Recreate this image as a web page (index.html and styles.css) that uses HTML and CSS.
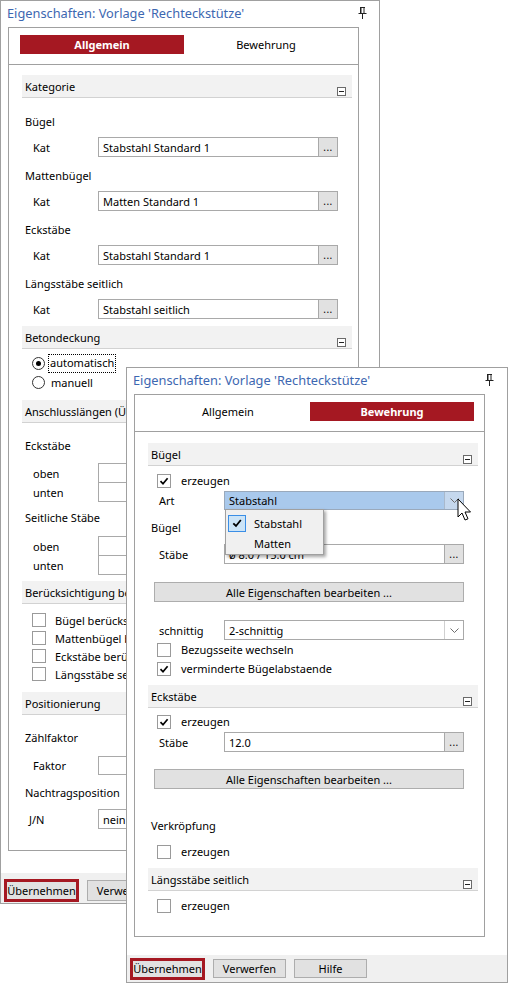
FILE: index.html
```html
<!DOCTYPE html>
<html lang="de">
<head>
<meta charset="utf-8">
<title>Eigenschaften</title>
<link rel="stylesheet" href="styles.css">
</head>
<body>
<div class="desk">

  <section class="win win-back">
    <header class="wtitle">
      <span>Eigenschaften: Vorlage 'Rechteckstütze'</span>
      <svg class="pin" width="9" height="12" viewBox="0 0 9 12"><path d="M2 0.5h5M3 0.5v6M6 0.5v6M2.5 1v5M0.5 6.5h8M4.5 7v5" stroke="#222" fill="none"/></svg>
    </header>
    <div class="panel">
      <div class="tabs"><div class="tab on">Allgemein</div><div class="tab">Bewehrung</div></div>
      <div class="content">
        <div class="band m10"><span>Kategorie</span><i class="coll"></i></div>
        <div class="lbl m14">Bügel</div>
        <div class="row m5"><span class="key">Kat</span><div class="field"><span class="val">Stabstahl Standard 1</span><b class="dots">...</b></div></div>
        <div class="lbl m9">Mattenbügel</div>
        <div class="row m5"><span class="key">Kat</span><div class="field"><span class="val">Matten Standard 1</span><b class="dots">...</b></div></div>
        <div class="lbl m9">Eckstäbe</div>
        <div class="row m5"><span class="key">Kat</span><div class="field"><span class="val">Stabstahl Standard 1</span><b class="dots">...</b></div></div>
        <div class="lbl m9">Längsstäbe seitlich</div>
        <div class="row m5"><span class="key">Kat</span><div class="field"><span class="val">Stabstahl seitlich</span><b class="dots">...</b></div></div>

        <div class="band m7"><span>Betondeckung</span><i class="coll"></i></div>
        <div class="radio m5"><i class="rb on"></i><span class="focus">automatisch</span></div>
        <div class="radio"><i class="rb"></i><span class="rtxt">manuell</span></div>

        <div class="band m8"><span>Anschlusslängen (Überstände)</span><i class="coll"></i></div>
        <div class="lbl m13">Eckstäbe</div>
        <div class="stack m7">
          <div class="row"><span class="key">oben</span><div class="field"><span class="val"></span></div></div>
          <div class="row up1"><span class="key">unten</span><div class="field"><span class="val"></span></div></div>
        </div>
        <div class="lbl m6">Seitliche Stäbe</div>
        <div class="stack m8">
          <div class="row"><span class="key">oben</span><div class="field"><span class="val"></span></div></div>
          <div class="row up1"><span class="key">unten</span><div class="field"><span class="val"></span></div></div>
        </div>

        <div class="band m6"><span>Berücksichtigung bei Bewehrung</span><i class="coll"></i></div>
        <div class="chk m7"><i class="box"></i><span>Bügel berücksichtigen</span></div>
        <div class="chk"><i class="box"></i><span>Mattenbügel berücksichtigen</span></div>
        <div class="chk"><i class="box"></i><span>Eckstäbe berücksichtigen</span></div>
        <div class="chk"><i class="box"></i><span>Längsstäbe seitlich berücksichtigen</span></div>

        <div class="band m9"><span>Positionierung</span><i class="coll"></i></div>
        <div class="lbl m13">Zählfaktor</div>
        <div class="row h19 m8"><span class="key">Faktor</span><div class="field"><span class="val"></span></div></div>
        <div class="lbl m8">Nachtragsposition</div>
        <div class="row m6"><span class="key jn">J/N</span><div class="field"><span class="val">nein</span></div></div>
      </div>
    </div>
    <footer class="wfoot">
      <span class="btn primary">Übernehmen</span>
      <span class="btn">Verwerfen</span>
      <span class="btn">Hilfe</span>
    </footer>
  </section>

  <section class="win win-front">
    <header class="wtitle">
      <span>Eigenschaften: Vorlage 'Rechteckstütze'</span>
      <svg class="pin" width="9" height="12" viewBox="0 0 9 12"><path d="M2 0.5h5M3 0.5v6M6 0.5v6M2.5 1v5M0.5 6.5h8M4.5 7v5" stroke="#222" fill="none"/></svg>
    </header>
    <div class="panel">
      <div class="tabs"><div class="tab">Allgemein</div><div class="tab on">Bewehrung</div></div>
      <div class="content">
        <div class="band m11"><span>Bügel</span><i class="coll"></i></div>
        <div class="chk h19 m5"><i class="box"><svg viewBox="0 0 12 12" width="12" height="12"><path d="M2.5 6.2 L5 8.8 L9.6 3.2" stroke="#000" stroke-width="1.7" fill="none"/></svg></i><span>erzeugen</span></div>
        <div class="row h19 m1"><span class="key">Art</span><div class="field sel hl"><span class="val">Stabstahl</span><b class="arr"><svg width="9" height="5" viewBox="0 0 9 5"><path d="M0.5 0.5 L4.5 4.5 L8.5 0.5" stroke="#6d6d6d" fill="none"/></svg></b></div></div>
        <div class="lbl m8">Bügel</div>
        <div class="row m6"><span class="key">Stäbe</span><div class="field"><span class="val">ø 8.0 / 15.0 cm</span><b class="dots">...</b></div></div>
        <div class="wide m18">Alle Eigenschaften bearbeiten ...</div>
        <div class="row m18"><span class="key">schnittig</span><div class="field sel"><span class="val">2-schnittig</span><b class="arr"><svg width="9" height="5" viewBox="0 0 9 5"><path d="M0.5 0.5 L4.5 4.5 L8.5 0.5" stroke="#6d6d6d" fill="none"/></svg></b></div></div>
        <div class="chk h19"><i class="box"></i><span>Bezugsseite wechseln</span></div>
        <div class="chk h19"><i class="box"><svg viewBox="0 0 12 12" width="12" height="12"><path d="M2.5 6.2 L5 8.8 L9.6 3.2" stroke="#000" stroke-width="1.7" fill="none"/></svg></i><span>verminderte Bügelabstaende</span></div>

        <div class="band m7"><span>Eckstäbe</span><i class="coll"></i></div>
        <div class="chk h19 m4"><i class="box"><svg viewBox="0 0 12 12" width="12" height="12"><path d="M2.5 6.2 L5 8.8 L9.6 3.2" stroke="#000" stroke-width="1.7" fill="none"/></svg></i><span>erzeugen</span></div>
        <div class="row m1"><span class="key">Stäbe</span><div class="field"><span class="val">12.0</span><b class="dots">...</b></div></div>
        <div class="wide m17">Alle Eigenschaften bearbeiten ...</div>

        <div class="lbl m27">Verkröpfung</div>
        <div class="chk h19 m6"><i class="box"></i><span>erzeugen</span></div>

        <div class="band m7"><span>Längsstäbe seitlich</span><i class="coll"></i></div>
        <div class="chk h19 m5"><i class="box"></i><span>erzeugen</span></div>
      </div>
    </div>
    <footer class="wfoot">
      <span class="btn primary">Übernehmen</span>
      <span class="btn">Verwerfen</span>
      <span class="btn">Hilfe</span>
    </footer>

    <div class="popup">
      <div class="pitem"><i class="pcheck"><svg viewBox="0 0 12 12" width="12" height="12"><path d="M2.3 6.3 L5 9 L9.8 3" stroke="#000" stroke-width="1.8" fill="none"/></svg></i><span>Stabstahl</span></div>
      <div class="pitem"><i class="pspace"></i><span>Matten</span></div>
    </div>
    <svg class="cursor" width="16" height="26" viewBox="0 0 16 26"><path d="M1 1 L1 19 L5 15 L8 22 L11 20.8 L8 14 L13.5 14 Z" fill="#fff" stroke="#000" stroke-width="1" stroke-linejoin="miter"/></svg>
  </section>

</div>
</body>
</html>
```
FILE: styles.css
```css
* { box-sizing: border-box; }
html, body { margin: 0; padding: 0; background: #fff; }
body {
  font-family: "Noto Sans", "Open Sans", sans-serif;
  font-size: 11px;
  color: #000;
}
.desk { position: relative; width: 508px; height: 983px; overflow: hidden; background: #fff; }

.m1 { margin-top: 1px; }
.m4 { margin-top: 4px; }
.m5 { margin-top: 5px; }
.m6 { margin-top: 6px; }
.m7 { margin-top: 7px; }
.m8 { margin-top: 8px; }
.m9 { margin-top: 9px; }
.m10 { margin-top: 10px; }
.m11 { margin-top: 11px; }
.m13 { margin-top: 13px; }
.m14 { margin-top: 14px; }
.m17 { margin-top: 17px; }
.m18 { margin-top: 18px; }
.m27 { margin-top: 27px; }

.win {
  position: absolute;
  background: #fff;
  border: 1px solid #a0a0a0;
  display: flex;
  flex-direction: column;
}
.win-back { left: 0; top: 0; width: 380px; height: 904px; }
.win-front { left: 126px; top: 367px; width: 382px; height: 616px; }

.wtitle {
  flex: none;
  display: flex;
  align-items: center;
  justify-content: space-between;
  height: 26px;
  padding: 0 12px 2px 6px;
  color: #3d67b1;
  font-size: 12.8px;
  white-space: nowrap;
}
.win-front .wtitle { padding-right: 13px; }
.pin { display: block; }

.panel {
  flex: none;
  border: 1px solid #a0a0a0;
  margin-left: 7px;
  display: flex;
  flex-direction: column;
  overflow: hidden;
}
.win-back .panel { height: 824px; margin-right: 20px; }
.win-front .panel { height: 543px; margin-right: 22px; }

.tabs {
  flex: none;
  height: 37px;
  border-bottom: 1px solid #a0a0a0;
  display: flex;
  padding: 7px 0 0 11px;
}
.tab { width: 164px; height: 19px; line-height: 19px; text-align: center; }
.tab.on { background: #a51822; color: #fff; font-weight: bold; }

.content { padding: 0 6px 0 13px; }

.band {
  height: 23px;
  background: #f2f2f2;
  border-bottom: 1px solid #d2d2d2;
  padding-left: 3px;
  display: flex;
  justify-content: space-between;
  white-space: nowrap;
}
.band span { line-height: 23px; }
.coll {
  align-self: flex-end;
  width: 9px; height: 9px;
  margin: 0 6px 1px 0;
  border: 1px solid #6a6a6a;
  background: #fff;
  display: flex; align-items: center; justify-content: center;
}
.coll::before { content: ""; width: 5px; height: 1px; background: #222; }

.lbl { height: 20px; line-height: 20px; padding-left: 3px; white-space: nowrap; }

.row { height: 20px; display: flex; align-items: stretch; white-space: nowrap; }
.row.h19 { height: 19px; }
.key { width: 76px; padding-left: 11px; display: flex; align-items: center; flex: none; }
.key.jn { padding-left: 7px; }
.field {
  width: 240px; flex: none;
  border: 1px solid #a9a9a9;
  background: #fff;
  display: flex;
}
.val { flex: 1; padding-left: 4px; display: flex; align-items: center; overflow: hidden; }
.dots {
  width: 19px; flex: none;
  border-left: 1px solid #a9a9a9;
  background: #e1e1e1;
  font-weight: normal;
  font-size: 10px;
  display: flex; align-items: flex-end; justify-content: center;
  padding-bottom: 2px;
  letter-spacing: 0.5px;
}
.arr {
  width: 19px; flex: none;
  border-left: 1px solid #d0d0d0;
  display: flex; align-items: center; justify-content: center;
}
.field.hl { background: #a9c9ec; border-color: #9aa9bb; }
.field.hl .arr { background: #c5d8ee; border-left-color: #a9b9cc; }

.up1 { margin-top: -1px; }

.radio { height: 19px; display: flex; align-items: center; white-space: nowrap; }
.rb {
  width: 13px; height: 13px; margin-left: 10px;
  border: 1px solid #333; border-radius: 50%;
  display: flex; align-items: center; justify-content: center; flex: none;
}
.rb.on::before { content: ""; width: 5px; height: 5px; border-radius: 50%; background: #000; }
.focus { margin-left: 3px; border: 1px dotted #000; padding: 0 1px 1px 1px; line-height: 16px; }
.rtxt { margin-left: 6px; }

.chk { height: 18px; display: flex; align-items: center; white-space: nowrap; }
.chk.h19 { height: 19px; }
.box {
  width: 14px; height: 14px; margin-left: 10px; margin-right: 9px; flex: none;
  border: 1px solid #9a9a9a; background: #fff;
  display: flex; align-items: center; justify-content: center;
}
.win-front .box { margin-left: 9px; margin-right: 10px; }

.wide {
  width: 310px; height: 20px; margin-left: 6px;
  background: #e1e1e1; border: 1px solid #adadad;
  display: flex; align-items: center; justify-content: center;
}

.wfoot {
  flex: none;
  background: #f0f0f0;
  display: flex;
  align-items: center;
  gap: 8px;
  padding-left: 3px;
  white-space: nowrap;
}
.win-back .wfoot { height: 30px; margin-top: 22px; padding-top: 5px; }
.win-front .wfoot { height: 27px; margin-top: 18px; }
.btn {
  width: 73px; height: 19px;
  background: #e1e1e1; border: 1px solid #adadad;
  display: flex; align-items: center; justify-content: center; flex: none;
}
.win-back .btn { height: 21px; }
.btn.primary { width: 75px; height: 22px; border: 3px solid #a51822; }
.win-back .btn.primary { height: 23px; }

.popup {
  position: absolute;
  left: 98px; top: 141px;
  width: 99px; height: 46px;
  background: #f0f0f0;
  border: 1px solid #a0a0a0;
  box-shadow: 2px 2px 3px rgba(0,0,0,0.35);
  padding: 3px 0 0 2px;
}
.pitem { height: 20px; display: flex; align-items: center; }
.pcheck, .pspace { width: 18px; height: 17px; flex: none; margin-right: 8px; }
.pcheck {
  border: 1px solid #3a8ee6; background: #cce4f7;
  display: flex; align-items: center; justify-content: center;
}
.cursor { position: absolute; left: 330px; top: 130px; }
```
